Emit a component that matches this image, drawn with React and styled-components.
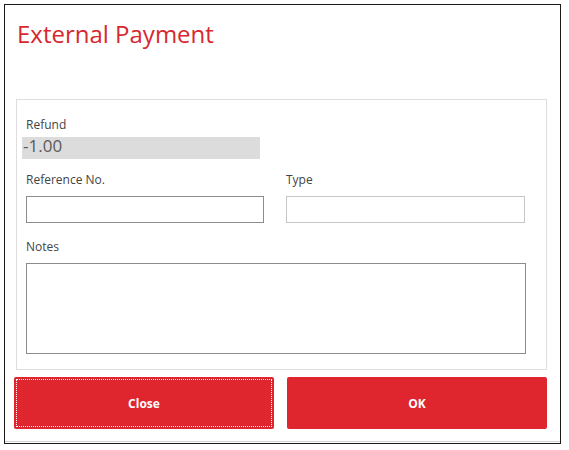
import React from "react";
import styled, { createGlobalStyle } from "styled-components";

const Global = createGlobalStyle`
  html, body { margin: 0; padding: 0; background: #fff; }
  body { font-family: "Open Sans", "Noto Sans", sans-serif; }
  * { box-sizing: border-box; }
`;

const Frame = styled.div`
  margin: 4px 0 0 4px;
  width: 557px;
  height: 440px;
  border: 1px solid #1a1a1a;
  display: flex;
  flex-direction: column;
  background: #fff;
`;

const Header = styled.div`
  padding: 13px 0 0 12px;
  margin-bottom: 49px;
`;

const Title = styled.h1`
  margin: 0;
  font-size: 24px;
  line-height: 32px;
  font-weight: 400;
  color: #d8272f;
`;

const Panel = styled.div`
  margin: 0 13px 0 11px;
  height: 271px;
  border: 1px solid #dedede;
  padding: 17px 18px 15px 9px;
  display: flex;
  flex-direction: column;
`;

const Label = styled.div`
  font-size: 12px;
  line-height: 16px;
  color: #444;
  margin-top: ${(p) => p.$top || 0}px;
  margin-bottom: ${(p) => p.$bottom || 0}px;
`;

const ReadOnly = styled.div`
  margin-left: -4px;
  width: 238px;
  height: 22px;
  background: #dcdcdc;
  color: #5a5a5a;
  font-size: 17px;
  line-height: 18px;
  padding-left: 1px;
`;

const Row = styled.div`
  display: grid;
  grid-template-columns: 238px 239px;
  column-gap: 22px;
  margin-top: 13px;
`;

const Field = styled.div`
  display: flex;
  flex-direction: column;
`;

const Input = styled.input`
  height: 27px;
  width: 100%;
  border: 1px solid ${(p) => (p.$dark ? "#8c8c8c" : "#c6c6c6")};
  border-radius: 0;
  background: #fff;
  outline: none;
  padding: 0 4px;
  font: inherit;
`;

const Notes = styled.textarea`
  width: 500px;
  height: 91px;
  border: 1px solid #8c8c8c;
  border-radius: 0;
  resize: none;
  outline: none;
  font: inherit;
  display: block;
`;

const Footer = styled.div`
  margin-top: 7px;
  padding: 0 12px 12px 9px;
  border-bottom: 1px solid #d0d0d0;
  margin-bottom: 1px;
  display: grid;
  grid-template-columns: 260px 260px;
  column-gap: 13px;
`;

const Button = styled.button`
  height: 52px;
  border: none;
  border-radius: 2px;
  background: #df252e;
  color: #fff;
  font-family: "Open Sans", "Noto Sans", sans-serif;
  font-weight: 700;
  font-size: 12px;
  cursor: pointer;
  outline: ${(p) => (p.$focused ? "1px dotted #fff" : "none")};
  outline-offset: -3px;
`;

export default function App() {
  return (
    <>
      <Global />
      <Frame>
        <Header>
          <Title>External Payment</Title>
        </Header>
        <Panel>
          <Label $bottom={4}>Refund</Label>
          <ReadOnly>-1.00</ReadOnly>
          <Row>
            <Field>
              <Label $bottom={8}>Reference No.</Label>
              <Input $dark />
            </Field>
            <Field>
              <Label $bottom={8}>Type</Label>
              <Input />
            </Field>
          </Row>
          <Label $top={16} $bottom={8}>Notes</Label>
          <Notes />
        </Panel>
        <Footer>
          <Button $focused>Close</Button>
          <Button>OK</Button>
        </Footer>
      </Frame>
    </>
  );
}
